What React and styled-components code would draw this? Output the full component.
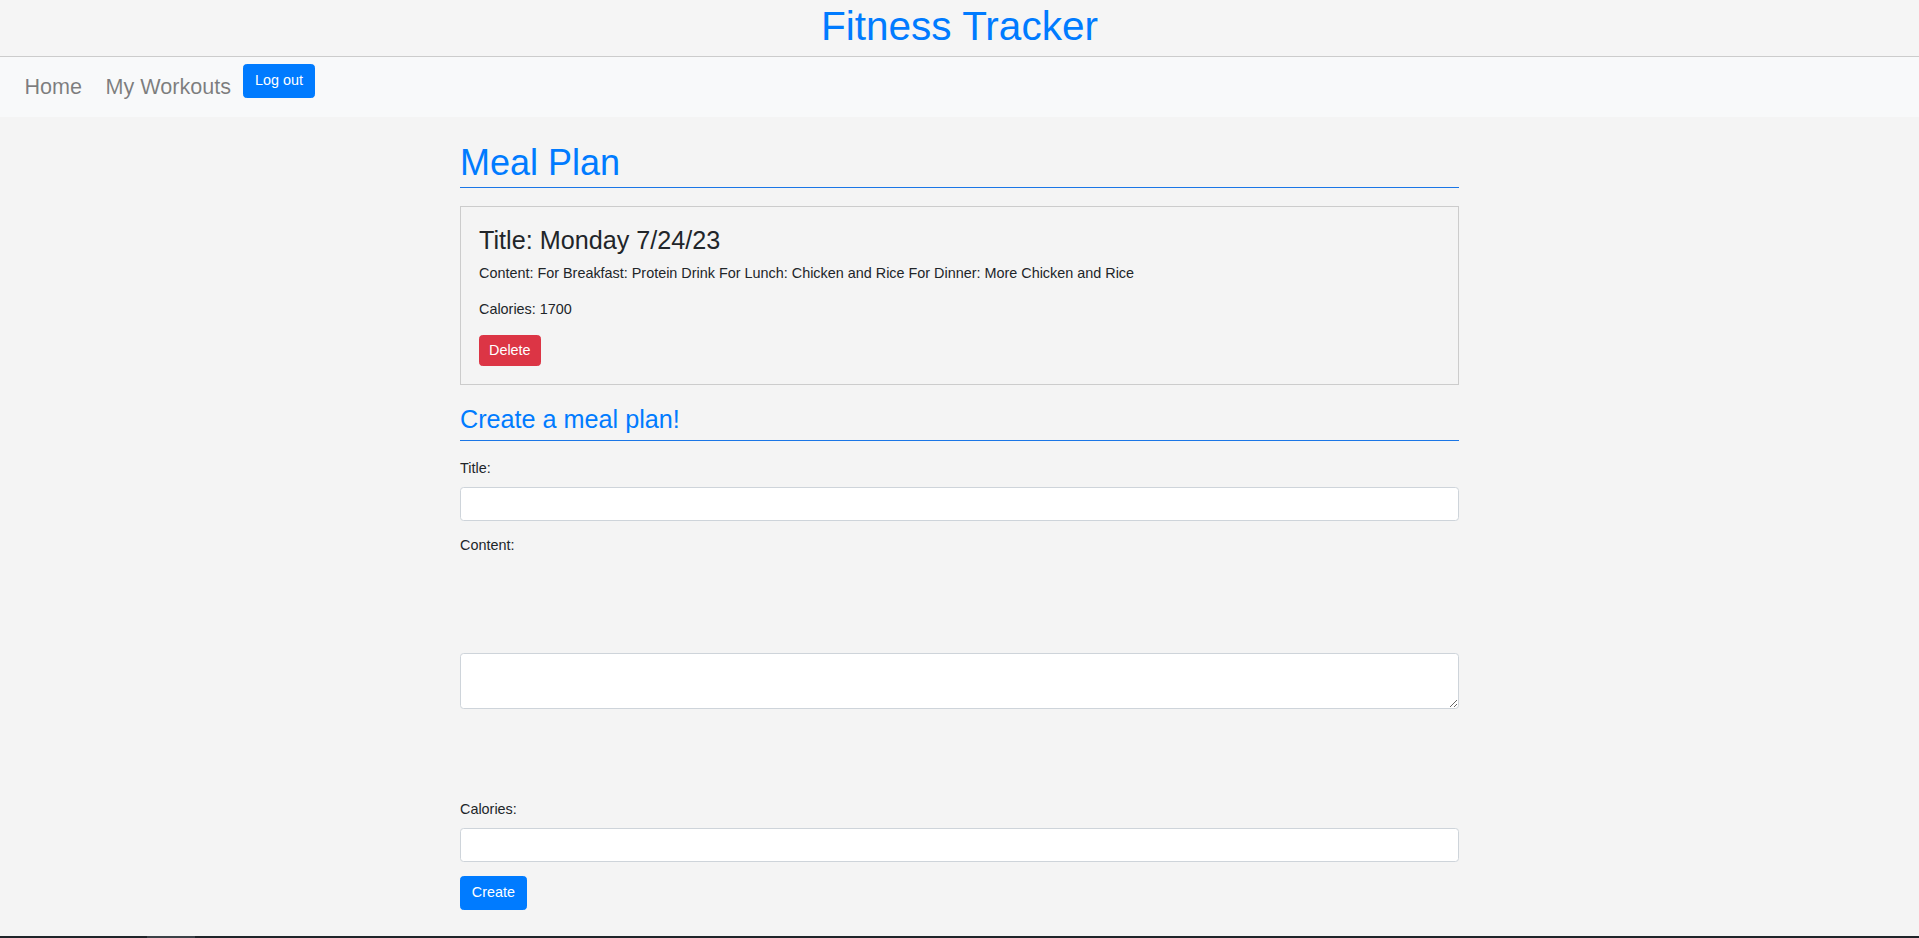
import React from 'react'
import styled, {createGlobalStyle} from 'styled-components'

const GlobalStyle = createGlobalStyle`
  html, body {
    margin: 0;
    padding: 0;
  }
  body {
    background: #f4f4f4;
    color: #212529;
    font-family: "Liberation Sans", Arial, sans-serif;
    font-size: 14.4px;
    line-height: 1.5;
  }
  * {
    box-sizing: border-box;
  }
`

const Header = styled.header`
  height: 57px;
  background: #f5f5f5;
  border-bottom: 1px solid #cccccc;
  padding-top: 2px;
  text-align: center;
`

const SiteTitle = styled.h1`
  margin: 0;
  font-size: 40.5px;
  line-height: 48.6px;
  font-weight: 400;
  color: #007bff;
`

const NavBar = styled.nav`
  height: 60px;
  background: #f8f9fa;
  display: flex;
  align-items: flex-start;
  padding-left: 24.5px;
`

const NavLink = styled.a`
  margin-top: 14.3px;
  margin-right: ${props => props.gap || 0}px;
  font-size: 21.6px;
  line-height: 32.4px;
  color: rgba(0, 0, 0, 0.5);
  text-decoration: none;
  cursor: pointer;
`

const Button = styled.button`
  display: inline-block;
  font-family: inherit;
  font-size: 14.4px;
  line-height: 21.6px;
  font-weight: 400;
  color: #fff;
  background: ${props => props.$danger ? '#dc3545' : '#007bff'};
  border: 1px solid ${props => props.$danger ? '#dc3545' : '#007bff'};
  border-radius: 3.6px;
  padding: ${props => props.$small ? '4px 9px' : '5.3px 10.8px'};
  margin-top: ${props => props.$top || 0}px;
  cursor: pointer;
`

const Main = styled.main`
  width: 999px;
  margin: 0 auto;
`

const SectionTitle = styled.h2`
  margin: ${props => props.$top}px 0 ${props => props.$bottom}px;
  font-size: ${props => props.$size}px;
  line-height: 1.2;
  font-weight: 400;
  color: #007bff;
  padding-bottom: ${props => props.$pad}px;
  border-bottom: 1px solid #1a76e6;
`

const Card = styled.div`
  border: 1px solid #cccccc;
  padding: 18px;
`

const CardTitle = styled.h3`
  margin: 0 0 7.2px;
  font-size: 25.2px;
  line-height: 1.2;
  font-weight: 400;
`

const CardText = styled.p`
  margin: 0 0 14.4px;
`

const Form = styled.form`
  display: flex;
  flex-direction: column;
  align-items: flex-start;
`

const Label = styled.label`
  margin-top: ${props => props.$top || 0}px;
  margin-bottom: 7.6px;
`

const Field = styled.input`
  width: 100%;
  height: 34.2px;
  font-family: inherit;
  font-size: 14.4px;
  padding: 5.4px 10.8px;
  background: #fff;
  border: 1px solid #ced4da;
  border-radius: 3.6px;
  outline: none;
`

const TextArea = styled.textarea`
  width: 100%;
  height: 55.6px;
  margin: 88.5px 0 89.9px;
  font-family: inherit;
  font-size: 14.4px;
  line-height: 21.6px;
  padding: 5.4px 10.8px;
  background: #fff;
  border: 1px solid #ced4da;
  border-radius: 3.6px;
  outline: none;
`

const Taskbar = styled.div`
  position: fixed;
  left: 0;
  right: 0;
  bottom: 0;
  height: 2px;
  background: #1f2429;
  .item {
    margin-left: 147px;
    width: 48px;
    height: 2px;
    background: #3b4147;
  }
`

export default function App() {
  const plans = [
    {
      title: 'Monday 7/24/23',
      content: 'For Breakfast: Protein Drink For Lunch: Chicken and Rice For Dinner: More Chicken and Rice',
      calories: 1700
    }
  ]
  return (
    <>
      <GlobalStyle />
      <Header>
        <SiteTitle>Fitness Tracker</SiteTitle>
      </Header>
      <NavBar>
        <NavLink gap={23.4}>Home</NavLink>
        <NavLink gap={12}>My Workouts</NavLink>
        <Button $top={7}>Log out</Button>
      </NavBar>
      <Main>
        <SectionTitle $size={36} $top={23.5} $bottom={18} $pad={3.6}>Meal Plan</SectionTitle>
        {plans.map((p, i) => (
          <Card key={i}>
            <CardTitle>Title: {p.title}</CardTitle>
            <CardText>Content: {p.content}</CardText>
            <CardText>Calories: {p.calories}</CardText>
            <Button $danger $small type="button">Delete</Button>
          </Card>
        ))}
        <SectionTitle $size={25.2} $top={19.2} $bottom={17.4} $pad={4.8}>Create a meal plan!</SectionTitle>
        <Form onSubmit={e => e.preventDefault()}>
          <Label htmlFor="title">Title:</Label>
          <Field id="title" type="text" />
          <Label htmlFor="content" $top={14.2}>Content:</Label>
          <TextArea id="content" rows={2} />
          <Label htmlFor="calories">Calories:</Label>
          <Field id="calories" type="number" />
          <Button $top={14} type="submit">Create</Button>
        </Form>
      </Main>
      <Taskbar><div className="item" /></Taskbar>
    </>
  )
}
